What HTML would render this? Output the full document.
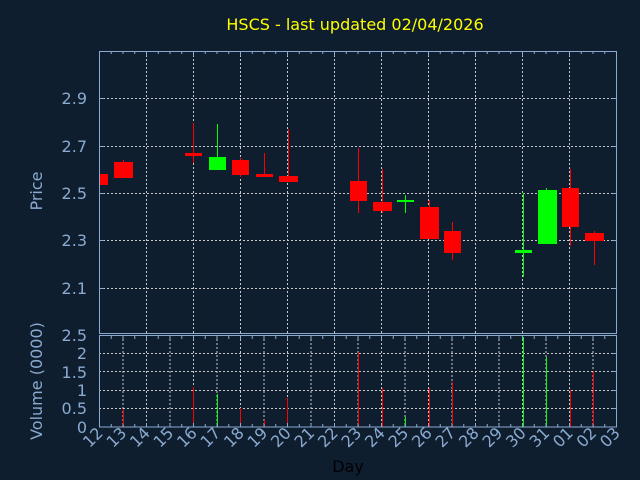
<!DOCTYPE html>
<html><head><meta charset="utf-8"><style>
html,body{margin:0;padding:0;background:#0f1e2f;}
svg{display:block}
text{font-family:"DejaVu Sans","Liberation Sans",sans-serif;}
</style></head><body>
<svg width="640" height="480" xmlns="http://www.w3.org/2000/svg">
<rect width="640" height="480" fill="#0f1e2f"/>
<text x="355" y="30" fill="#ffff00" font-size="16" text-anchor="middle">HSCS - last updated 02/04/2026</text>
<!-- price grid -->
<g stroke="#c8c8c8" stroke-width="1" stroke-dasharray="2 2">
<line x1="99" y1="98.5" x2="617" y2="98.5"/>
<line x1="99" y1="146.5" x2="617" y2="146.5"/>
<line x1="99" y1="193.5" x2="617" y2="193.5"/>
<line x1="99" y1="240.5" x2="617" y2="240.5"/>
<line x1="99" y1="288.5" x2="617" y2="288.5"/>
<line x1="146.5" y1="51" x2="146.5" y2="334"/>
<line x1="193.5" y1="51" x2="193.5" y2="334"/>
<line x1="240.5" y1="51" x2="240.5" y2="334"/>
<line x1="287.5" y1="51" x2="287.5" y2="334"/>
<line x1="334.5" y1="51" x2="334.5" y2="334"/>
<line x1="381.5" y1="51" x2="381.5" y2="334"/>
<line x1="428.5" y1="51" x2="428.5" y2="334"/>
<line x1="475.5" y1="51" x2="475.5" y2="334"/>
<line x1="522.5" y1="51" x2="522.5" y2="334"/>
<line x1="569.5" y1="51" x2="569.5" y2="334"/>
<!-- volume grid -->
<line x1="99" y1="408.5" x2="617" y2="408.5"/>
<line x1="99" y1="390.5" x2="617" y2="390.5"/>
<line x1="99" y1="371.5" x2="617" y2="371.5"/>
<line x1="99" y1="353.5" x2="617" y2="353.5"/>
<line x1="123" y1="335" x2="123" y2="427"/><line x1="146.5" y1="335" x2="146.5" y2="427"/>
<line x1="170" y1="335" x2="170" y2="427"/><line x1="193.5" y1="335" x2="193.5" y2="427"/>
<line x1="217" y1="335" x2="217" y2="427"/><line x1="240.5" y1="335" x2="240.5" y2="427"/>
<line x1="264" y1="335" x2="264" y2="427"/><line x1="287.5" y1="335" x2="287.5" y2="427"/>
<line x1="311" y1="335" x2="311" y2="427"/><line x1="334.5" y1="335" x2="334.5" y2="427"/>
<line x1="358" y1="335" x2="358" y2="427"/><line x1="381.5" y1="335" x2="381.5" y2="427"/>
<line x1="405" y1="335" x2="405" y2="427"/><line x1="428.5" y1="335" x2="428.5" y2="427"/>
<line x1="452" y1="335" x2="452" y2="427"/><line x1="475.5" y1="335" x2="475.5" y2="427"/>
<line x1="499" y1="335" x2="499" y2="427"/><line x1="522.5" y1="335" x2="522.5" y2="427"/>
<line x1="546" y1="335" x2="546" y2="427"/><line x1="569.5" y1="335" x2="569.5" y2="427"/>
<line x1="593" y1="335" x2="593" y2="427"/>
</g>
<!-- candles -->
<g fill="#ff0000" stroke="none">
<rect x="99" y="174" width="9" height="11"/>
<rect x="123" y="160" width="1" height="4"/><rect x="114" y="162" width="19" height="16"/>
<rect x="193" y="123" width="1" height="40"/><rect x="185" y="153" width="17" height="3"/>
<rect x="240" y="158" width="1" height="19"/><rect x="232" y="160" width="17" height="15"/>
<rect x="264" y="153" width="1" height="22"/><rect x="256" y="174" width="17" height="3"/>
<rect x="288" y="129" width="1" height="48"/><rect x="279" y="176" width="19" height="6"/>
<rect x="358" y="148" width="1" height="65"/><rect x="350" y="181" width="17" height="20"/>
<rect x="382" y="169" width="1" height="44"/><rect x="373" y="202" width="19" height="9"/>
<rect x="429" y="200" width="1" height="8"/><rect x="420" y="207" width="19" height="32"/>
<rect x="452" y="222" width="1" height="38"/><rect x="444" y="231" width="17" height="22"/>
<rect x="570" y="169" width="1" height="77"/><rect x="562" y="188" width="17" height="39"/>
<rect x="594" y="231" width="1" height="34"/><rect x="585" y="233" width="19" height="8"/>
</g>
<g fill="#00ff00">
<rect x="217" y="124" width="1" height="33"/><rect x="209" y="157" width="17" height="13"/>
<rect x="405" y="195" width="1" height="18"/><rect x="397" y="200" width="17" height="2"/>
<rect x="523" y="193" width="1" height="84"/><rect x="515" y="250" width="17" height="3"/>
<rect x="546" y="188" width="1" height="3"/><rect x="538" y="190" width="19" height="54"/>
</g>
<!-- volume bars -->
<g fill="#ff0000">
<rect x="123" y="409" width="1" height="18"/><rect x="193" y="387" width="1" height="40"/>
<rect x="240" y="408" width="1" height="19"/><rect x="264" y="420" width="1" height="7"/>
<rect x="287" y="398" width="1" height="29"/><rect x="358" y="352" width="1" height="75"/>
<rect x="382" y="388" width="1" height="39"/><rect x="429" y="388" width="1" height="39"/>
<rect x="452" y="382" width="1" height="45"/><rect x="570" y="390" width="1" height="37"/>
<rect x="593" y="371" width="1" height="56"/>
</g>
<g fill="#00ff00">
<rect x="217" y="394" width="1" height="33"/><rect x="405" y="417" width="1" height="10"/>
<rect x="523" y="337" width="1" height="90"/><rect x="546" y="357" width="1" height="70"/>
</g>
<!-- axes -->
<g stroke="#8aaad0" stroke-width="1" fill="none">
<rect x="99.5" y="51.5" width="517" height="282"/>
<rect x="99.5" y="335.5" width="517" height="91.5"/>
<line x1="99" y1="55" x2="617" y2="55" stroke-dasharray="1 10.75" stroke-width="4" transform="translate(0,-2)" opacity="0"/>
<path d="M99.5 51v4M111.25 51v3M123 51v3M134.75 51v3M146.5 51v5M158.25 51v3M170 51v3M181.75 51v3M193.5 51v5M205.25 51v3M217 51v3M228.75 51v3M240.5 51v5M252.25 51v3M264 51v3M275.75 51v3M287.5 51v5M299.25 51v3M311 51v3M322.75 51v3M334.5 51v5M346.25 51v3M358 51v3M369.75 51v3M381.5 51v5M393.25 51v3M405 51v3M416.75 51v3M428.5 51v5M440.25 51v3M452 51v3M463.75 51v3M475.5 51v5M487.25 51v3M499 51v3M510.75 51v3M522.5 51v5M534.25 51v3M546 51v3M557.75 51v3M569.5 51v5M581.25 51v3M593 51v3M604.75 51v3"/>
<path d="M111.25 336v3M123 336v3M134.75 336v3M146.5 336v4M158.25 336v3M170 336v3M181.75 336v3M193.5 336v4M205.25 336v3M217 336v3M228.75 336v3M240.5 336v4M252.25 336v3M264 336v3M275.75 336v3M287.5 336v4M299.25 336v3M311 336v3M322.75 336v3M334.5 336v4M346.25 336v3M358 336v3M369.75 336v3M381.5 336v4M393.25 336v3M405 336v3M416.75 336v3M428.5 336v4M440.25 336v3M452 336v3M463.75 336v3M475.5 336v4M487.25 336v3M499 336v3M510.75 336v3M522.5 336v4M534.25 336v3M546 336v3M557.75 336v3M569.5 336v4M581.25 336v3M593 336v3M604.75 336v3"/>
<path d="M111.25 427v-3M123 427v-3M134.75 427v-3M146.5 427v-4M158.25 427v-3M170 427v-3M181.75 427v-3M193.5 427v-4M205.25 427v-3M217 427v-3M228.75 427v-3M240.5 427v-4M252.25 427v-3M264 427v-3M275.75 427v-3M287.5 427v-4M299.25 427v-3M311 427v-3M322.75 427v-3M334.5 427v-4M346.25 427v-3M358 427v-3M369.75 427v-3M381.5 427v-4M393.25 427v-3M405 427v-3M416.75 427v-3M428.5 427v-4M440.25 427v-3M452 427v-3M463.75 427v-3M475.5 427v-4M487.25 427v-3M499 427v-3M510.75 427v-3M522.5 427v-4M534.25 427v-3M546 427v-3M557.75 427v-3M569.5 427v-4M581.25 427v-3M593 427v-3M604.75 427v-3"/>
<path d="M99 98.5h5M99 146.5h5M99 193.5h5M99 240.5h5M99 288.5h5M612 98.5h5M612 146.5h5M612 193.5h5M612 240.5h5M612 288.5h5M612 408.5h5M612 390.5h5M612 371.5h5M612 353.5h5"/>
</g>
<!-- labels -->
<g fill="#8aaad0" font-size="16" text-anchor="end">
<text x="87" y="104">2.9</text>
<text x="87" y="152">2.7</text>
<text x="87" y="199">2.5</text>
<text x="87" y="246">2.3</text>
<text x="87" y="294">2.1</text>
<text x="87" y="341">2.5</text>
<text x="87" y="359">2</text>
<text x="87" y="378">1.5</text>
<text x="87" y="396">1</text>
<text x="87" y="414">0.5</text>
<text x="87" y="433">0</text>
</g>
<text transform="translate(42,191) rotate(-90)" fill="#8aaad0" font-size="16" text-anchor="middle">Price</text>
<text transform="translate(42,381) rotate(-90)" fill="#8aaad0" font-size="16" text-anchor="middle">Volume (0000)</text>
<g fill="#8aaad0" font-size="16" text-anchor="end">
<text transform="translate(104,434) rotate(-45)">12</text>
<text transform="translate(127.5,434) rotate(-45)">13</text>
<text transform="translate(151,434) rotate(-45)">14</text>
<text transform="translate(174.5,434) rotate(-45)">15</text>
<text transform="translate(198,434) rotate(-45)">16</text>
<text transform="translate(221.5,434) rotate(-45)">17</text>
<text transform="translate(245,434) rotate(-45)">18</text>
<text transform="translate(268.5,434) rotate(-45)">19</text>
<text transform="translate(292,434) rotate(-45)">20</text>
<text transform="translate(315.5,434) rotate(-45)">21</text>
<text transform="translate(339,434) rotate(-45)">22</text>
<text transform="translate(362.5,434) rotate(-45)">23</text>
<text transform="translate(386,434) rotate(-45)">24</text>
<text transform="translate(409.5,434) rotate(-45)">25</text>
<text transform="translate(433,434) rotate(-45)">26</text>
<text transform="translate(456.5,434) rotate(-45)">27</text>
<text transform="translate(480,434) rotate(-45)">28</text>
<text transform="translate(503.5,434) rotate(-45)">29</text>
<text transform="translate(527,434) rotate(-45)">30</text>
<text transform="translate(550.5,434) rotate(-45)">31</text>
<text transform="translate(574,434) rotate(-45)">01</text>
<text transform="translate(597.5,434) rotate(-45)">02</text>
<text transform="translate(621,434) rotate(-45)">03</text>
</g>
<text x="348" y="472" fill="#000000" font-size="16" text-anchor="middle">Day</text>
</svg>
</body></html>
